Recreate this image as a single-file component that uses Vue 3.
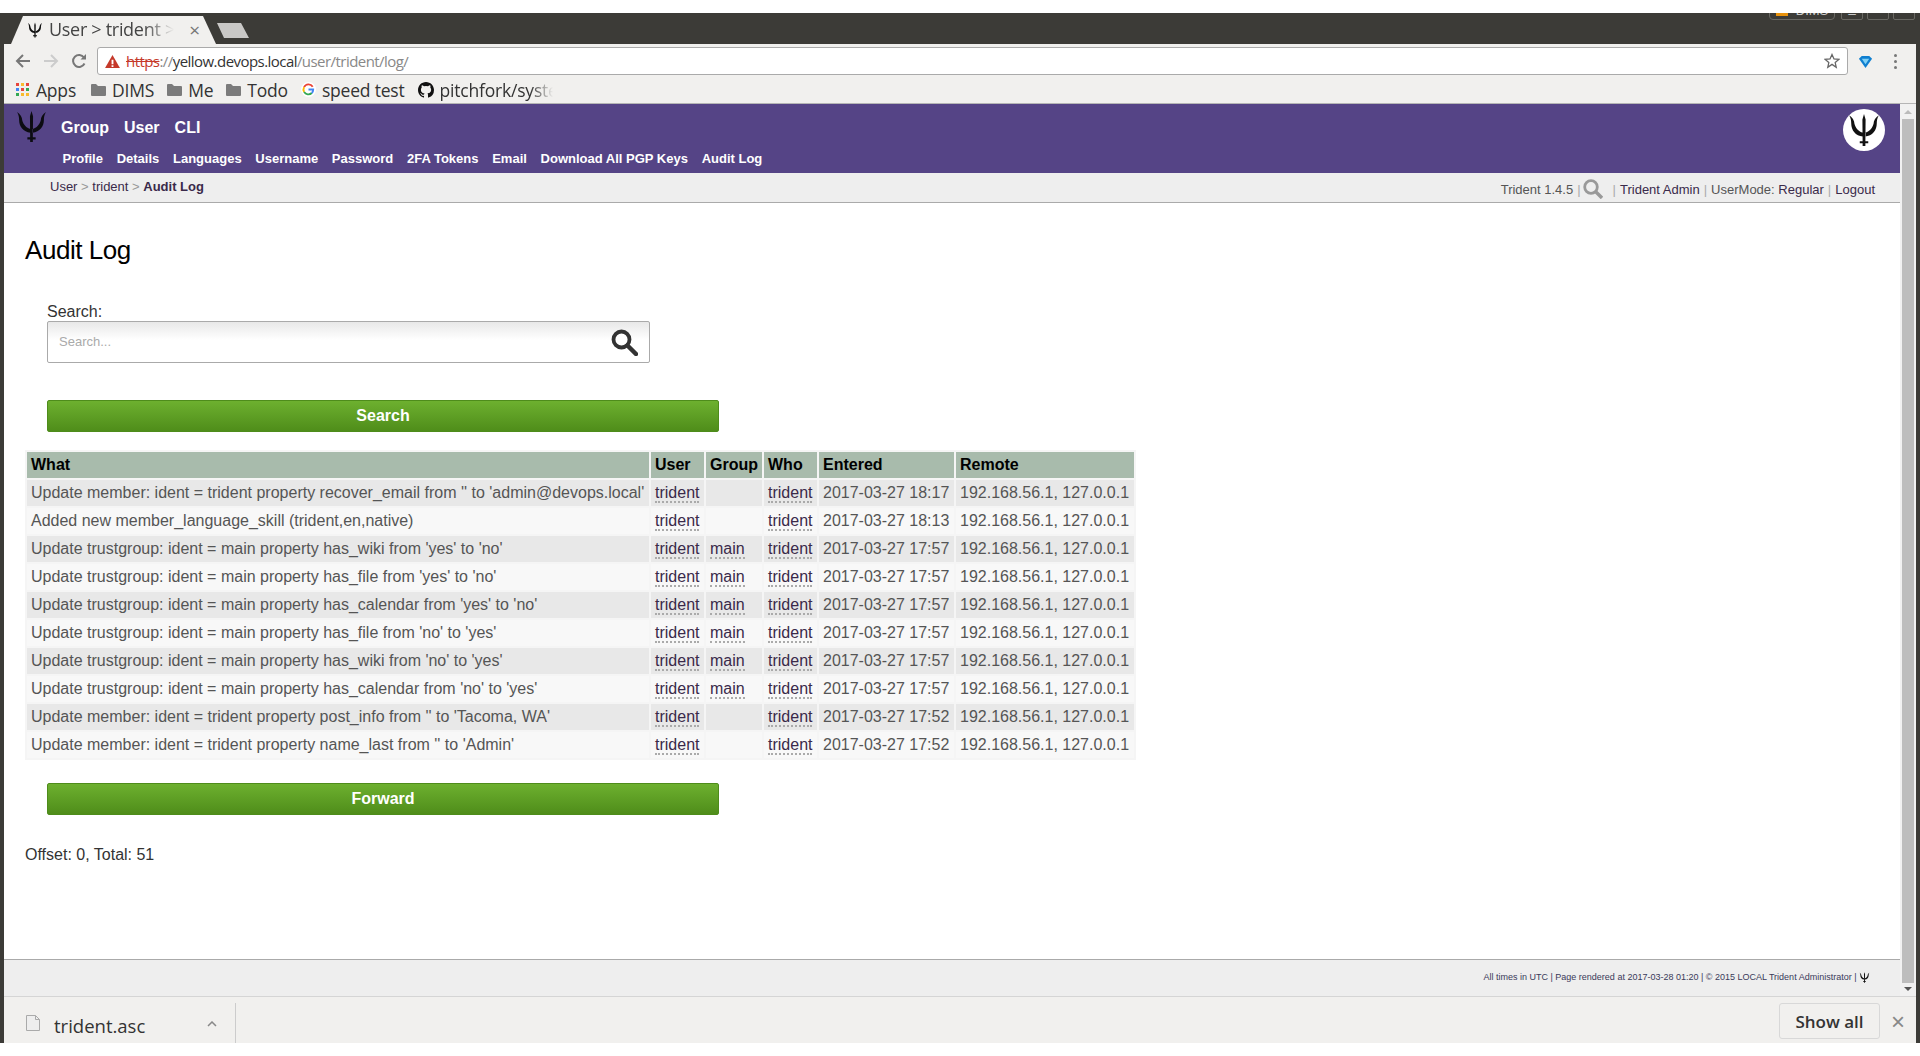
<template>
  <div class="screen">
    <div class="window">
      <!-- browser tab strip -->
      <div class="tabstrip">
        <div class="tab">
          <svg class="tab-icon" viewBox="0 0 32 30"><path :d="tridentPath" fill="#111" /></svg>
          <span class="tab-title">User &gt; trident &gt; Audit Log</span>
          <span class="tab-close">×</span>
        </div>
        <div class="newtab"></div>
        <div class="winctl">
          <span class="profile"><i class="warn-mini"></i>DIMS</span>
          <span class="winbtn">_</span>
          <span class="winbtn">□</span>
          <span class="winbtn">×</span>
        </div>
      </div>

      <!-- address bar -->
      <div class="toolbar">
        <svg class="nav-icon" viewBox="0 0 16 16"><path d="M15 8H2M8 2L2 8l6 6" fill="none" stroke="#777" stroke-width="2" /></svg>
        <svg class="nav-icon fwd" viewBox="0 0 16 16"><path d="M1 8h13M8 2l6 6-6 6" fill="none" stroke="#ccc" stroke-width="2" /></svg>
        <svg class="nav-icon reload" viewBox="0 0 16 16"><path d="M13.5 10.5A6 6 0 1 1 13 4.5" fill="none" stroke="#777" stroke-width="2" /><path d="M9.5 6.5H15V1z" fill="#777" /></svg>
        <div class="omnibox">
          <svg class="warn" viewBox="0 0 16 14"><path d="M8 0l8 14H0z" fill="#c5392a" /><path d="M7 5h2v5H7zM7 11h2v2H7z" fill="#fff" /></svg>
          <span class="url"><span class="https">https</span><span class="url-dim">://</span>yellow.devops.local<span class="url-dim">/user/trident/log/</span></span>
          <svg class="star" viewBox="0 0 16 16"><path d="M8 1.5l2 4.4 4.8.5-3.6 3.2 1 4.7L8 11.4l-4.2 2.9 1-4.7L1.200 6.400l4.800-.5z" fill="none" stroke="#666" stroke-width="1.300" /></svg>
        </div>
        <svg class="ext" viewBox="0 0 16 16"><path d="M1 5l3-3h8l3 3-7 10z" fill="#0f7fd0" /><path d="M4 5h8l-4 6z" fill="#7fd0f5" /></svg>
        <div class="dots"><i></i><i></i><i></i></div>
      </div>

      <!-- bookmarks -->
      <div class="bookmarks">
        <div class="apps-grid"><i v-for="(c, i) in appColors" :key="i" :style="{ background: c }"></i></div>
        <span class="bm bm-apps">Apps</span>
        <template v-for="f in folders" :key="f">
          <svg class="folder" viewBox="0 0 15 13"><path d="M0 2q0-1 1-1h4l2 2h7q1 0 1 1v8q0 1-1 1H1q-1 0-1-1z" fill="#7b7b7b" /></svg>
          <span class="bm">{{ f }}</span>
        </template>
        <svg class="g-icon" viewBox="0 0 16 16">
          <circle cx="8" cy="8" r="8" fill="#fff" />
          <path d="M12.500 5A5.300 5.300 0 0 0 3.300 5.500" fill="none" stroke="#ea4335" stroke-width="2" />
          <path d="M3.300 5.500a5.300 5.300 0 0 0 0 5" fill="none" stroke="#fbbc05" stroke-width="2" />
          <path d="M3.300 10.500a5.300 5.300 0 0 0 8.200 1.300" fill="none" stroke="#34a853" stroke-width="2" />
          <path d="M8 8h5a5.300 5.300 0 0 1-1.500 3.800" fill="none" stroke="#4285f4" stroke-width="2" />
        </svg>
        <span class="bm">speed test</span>
        <svg class="gh-icon" viewBox="0 0 16 16"><path d="M8 0C3.580 0 0 3.580 0 8c0 3.540 2.290 6.530 5.470 7.590.4.070.55-.17.55-.38v-1.340c-2.230.48-2.700-1.070-2.700-1.070-.36-.92-.89-1.170-.89-1.170-.73-.5.060-.49.060-.49.800.060 1.230.82 1.230.82.710 1.220 1.870.87 2.330.66.070-.52.280-.87.510-1.070-1.780-.2-3.640-.89-3.640-3.950 0-.87.310-1.590.82-2.150-.08-.2-.36-1.020.08-2.120 0 0 .67-.21 2.200.82a7.600 7.600 0 0 1 4 0c1.530-1.040 2.200-.82 2.200-.82.44 1.100.16 1.920.08 2.120.51.56.82 1.270.82 2.150 0 3.070-1.870 3.750-3.650 3.950.29.250.54.730.54 1.480v2.200c0 .21.150.46.55.38A8.010 8.010 0 0 0 16 8c0-4.420-3.580-8-8-8z" fill="#111" /></svg>
        <span class="bm bm-fade">pitchfork/system</span>
      </div>

      <div class="middle">
        <div class="page">
          <header class="topnav">
            <svg class="logo" viewBox="0 0 32 30"><path :d="tridentPath" fill="#0c0c12" /></svg>
            <div class="navs">
              <nav class="nav-main"><a v-for="n in mainNav" :key="n">{{ n }}</a></nav>
              <nav class="nav-sub"><a v-for="n in subNav" :key="n">{{ n }}</a></nav>
            </div>
            <div class="avatar">
              <svg viewBox="0 0 32 30"><path :d="tridentPath" fill="#111" /></svg>
            </div>
          </header>

          <div class="crumbs">
            <div class="crumb-left"><a>User</a> <em>&gt;</em> <a>trident</a> <em>&gt;</em> <b>Audit Log</b></div>
            <div class="crumb-right">
              <span class="version">Trident 1.4.5</span><em class="sep sep-tight">|</em>
              <svg class="crumb-search" viewBox="0 0 20 20"><circle cx="8" cy="8" r="6.300" fill="none" stroke="#999" stroke-width="2.800" /><path d="M12.500 12.500L19 19" stroke="#999" stroke-width="3.400" /></svg>
              <em class="sep gap-sep">|</em><a>Trident Admin</a><em class="sep">|</em><span class="version">UserMode:</span>&nbsp;<a>Regular</a><em class="sep">|</em><a>Logout</a>
            </div>
          </div>

          <main class="content">
            <h1 class="title">Audit Log</h1>
            <form class="search" @submit.prevent>
              <label class="search-label" for="q">Search:</label>
              <div class="search-box">
                <input id="q" class="search-input" placeholder="Search...">
                <svg class="search-glass" viewBox="0 0 27 27"><circle cx="10.500" cy="10.500" r="8" fill="#fff" stroke="#333" stroke-width="3.800" /><path d="M16.500 16.500L25 25" stroke="#333" stroke-width="4.500" stroke-linecap="round" /></svg>
              </div>
              <button class="btn btn-search">Search</button>
            </form>

            <table class="log">
              <thead>
                <tr><th v-for="h in headers" :key="h">{{ h }}</th></tr>
              </thead>
              <tbody>
                <tr v-for="(row, i) in rows" :key="i">
                  <td>{{ row.what }}</td>
                  <td><a class="lnk">trident</a></td>
                  <td><a v-if="row.group" class="lnk">{{ row.group }}</a></td>
                  <td><a class="lnk">trident</a></td>
                  <td>{{ row.entered }}</td>
                  <td>192.168.56.1, 127.0.0.1</td>
                </tr>
              </tbody>
            </table>

            <button class="btn btn-forward">Forward</button>
            <p class="offset">Offset: 0, Total: 51</p>
          </main>

          <footer class="pagefoot">
            <span>All times in UTC | Page rendered at 2017-03-28 01:20 | © 2015 LOCAL Trident Administrator | </span>
            <svg class="foot-icon" viewBox="0 0 32 30"><path :d="tridentPath" fill="#111" /></svg>
          </footer>
        </div>

        <div class="scrollbar">
          <i class="arrow-up"></i>
          <div class="thumb"></div>
          <i class="arrow-down"></i>
        </div>
      </div>

      <!-- download shelf -->
      <div class="shelf">
        <svg class="file" viewBox="0 0 14 16"><path d="M.5.5h9l4 4v11H.500z" fill="#eee" stroke="#aaa" /><path d="M9.500.5v4h4" fill="none" stroke="#aaa" /></svg>
        <span class="file-name">trident.asc</span>
        <svg class="chev" viewBox="0 0 10 6"><path d="M1 5l4-4 4 4" fill="none" stroke="#888" stroke-width="1.500" /></svg>
        <div class="shelf-div"></div>
        <button class="showall">Show all</button>
        <span class="shelf-x">×</span>
      </div>
    </div>
  </div>
</template>

<script setup>
// filled trident: centre shaft with crossbar, then the two curved side prongs
const tridentPath = 'M16 0L17.500 5L17.300 25.500H20V27.500H17.300V30H14.700V27.500H12V25.500H14.700L14.500 5Z'
  + 'M2 1C5 3 7 6 7 9C8 13 11 16.500 15 17.500V21C8 20.500 4 15 4 9C4 6 3.500 3.500 2 1Z'
  + 'M30 1C27 3 25 6 25 9C24 13 21 16.500 17 17.500V21C24 20.500 28 15 28 9C28 6 28.500 3.500 30 1Z'

const appColors = ['#e8453c', '#f9bb2d', '#e8453c', '#4285f4', '#e8453c', '#34a853', '#34a853', '#f9bb2d', '#f9bb2d']
const folders = ['DIMS', 'Me', 'Todo']
const mainNav = ['Group', 'User', 'CLI']
const subNav = ['Profile', 'Details', 'Languages', 'Username', 'Password', '2FA Tokens', 'Email', 'Download All PGP Keys', 'Audit Log']
const headers = ['What', 'User', 'Group', 'Who', 'Entered', 'Remote']

const rows = [
  { what: "Update member: ident = trident property recover_email from '' to 'admin@devops.local'", group: '', entered: '2017-03-27 18:17' },
  { what: 'Added new member_language_skill (trident,en,native)', group: '', entered: '2017-03-27 18:13' },
  { what: "Update trustgroup: ident = main property has_wiki from 'yes' to 'no'", group: 'main', entered: '2017-03-27 17:57' },
  { what: "Update trustgroup: ident = main property has_file from 'yes' to 'no'", group: 'main', entered: '2017-03-27 17:57' },
  { what: "Update trustgroup: ident = main property has_calendar from 'yes' to 'no'", group: 'main', entered: '2017-03-27 17:57' },
  { what: "Update trustgroup: ident = main property has_file from 'no' to 'yes'", group: 'main', entered: '2017-03-27 17:57' },
  { what: "Update trustgroup: ident = main property has_wiki from 'no' to 'yes'", group: 'main', entered: '2017-03-27 17:57' },
  { what: "Update trustgroup: ident = main property has_calendar from 'no' to 'yes'", group: 'main', entered: '2017-03-27 17:57' },
  { what: "Update member: ident = trident property post_info from '' to 'Tacoma, WA'", group: '', entered: '2017-03-27 17:52' },
  { what: "Update member: ident = trident property name_last from '' to 'Admin'", group: '', entered: '2017-03-27 17:52' }
]
</script>

<style>
html, body {
  margin: 0;
  background: #fff;
}
</style>

<style scoped>
.screen {
  height: 1056px;
  padding: 13px 0;
  box-sizing: border-box;
  background: #fff;
  overflow: hidden;
  font-family: "Liberation Sans", Arial, sans-serif;
}

.window {
  height: 100%;
  display: flex;
  flex-direction: column;
  border-left: 4px solid #3c3b37;
  border-right: 4px solid #3c3b37;
  box-sizing: border-box;
  background: #f1f0ee;
}

.tabstrip {
  height: 31px;
  flex: none;
  display: flex;
  background: #3c3b37;
  overflow: hidden;
}

.tab {
  width: 205px;
  height: 28px;
  margin: 3px 0 0 7px;
  flex: none;
  display: flex;
  align-items: center;
  box-sizing: border-box;
  padding: 0 16px 0 16px;
  background: #f1f0ee;
  clip-path: polygon(0 100%, 12px 0, 192px 0, 100% 100%);
  font-family: "Open Sans", sans-serif;
  font-size: 18px;
  line-height: 24px;
  color: #444;
}

.tab-icon {
  width: 16px;
  height: 16px;
  flex: none;
  margin-right: 6px;
}

.tab-title {
  flex: 1;
  overflow: hidden;
  white-space: nowrap;
  margin-top: -2px;
  -webkit-mask-image: linear-gradient(to right, #000 70%, transparent 92%);
  mask-image: linear-gradient(to right, #000 70%, transparent 92%);
  letter-spacing: -0.3px;
}

.tab-close {
  color: #777;
  font-size: 19px;
  margin-left: 4px;
}

.newtab {
  width: 32px;
  height: 15px;
  margin: 10px 0 0 1px;
  flex: none;
  background: #c9c8c6;
  clip-path: polygon(0 0, 24px 0, 100% 100%, 7px 100%);
}

.winctl {
  margin-left: auto;
  margin-right: 1px;
  display: flex;
  gap: 4px;
  height: 7px;
  align-items: flex-end;
}

.profile {
  width: 66px;
  height: 22px;
  margin-right: 2px;
  box-sizing: border-box;
  display: flex;
  align-items: flex-end;
  justify-content: center;
  gap: 8px;
  border: 1px solid #6a6964;
  border-radius: 4px;
  color: #ccc;
  font-size: 13px;
  line-height: 14px;
  padding-bottom: 1px;
}

.warn-mini {
  width: 12px;
  height: 6px;
  background: #e8920c;
  margin-bottom: 2px;
}

.winbtn {
  width: 22px;
  height: 22px;
  box-sizing: border-box;
  border: 1px solid #6a6964;
  border-radius: 2px;
  color: #ddd;
  font-size: 13px;
  line-height: 18px;
  text-align: center;
  overflow: hidden;
}

.toolbar {
  height: 34px;
  flex: none;
  display: flex;
  align-items: center;
  padding-left: 11px;
}

.nav-icon {
  width: 16px;
  height: 16px;
  flex: none;
}

.fwd {
  margin-left: 12px;
}

.reload {
  margin-left: 12px;
}

.omnibox {
  width: 1751px;
  height: 28px;
  margin-left: 10px;
  flex: none;
  box-sizing: border-box;
  display: flex;
  align-items: center;
  padding: 0 7px 0 7px;
  background: #fff;
  border: 1px solid #aaa;
  border-radius: 3px;
}

.warn {
  width: 15px;
  height: 13px;
  margin-right: 6px;
}

.url {
  font-family: "Open Sans", sans-serif;
  font-size: 15px;
  letter-spacing: -0.55px;
  color: #333;
  flex: 1;
}

.url-dim {
  color: #888;
}

.https {
  color: #c5392a;
  text-decoration: line-through;
}

.star {
  width: 16px;
  height: 16px;
}

.ext {
  width: 15px;
  height: 15px;
  margin-left: 10px;
  flex: none;
}

.dots {
  margin-left: 21px;
  display: flex;
  flex-direction: column;
  gap: 3px;
}

.dots i {
  width: 3px;
  height: 3px;
  border-radius: 50%;
  background: #777;
}

.bookmarks {
  height: 26px;
  flex: none;
  display: flex;
  align-items: center;
  padding: 0 0 2px 12px;
  border-bottom: 1px solid #b5b5b5;
  box-sizing: border-box;
  font-family: "Open Sans", sans-serif;
  font-size: 17.500px;
  color: #333;
}

.apps-grid {
  width: 13px;
  height: 13px;
  display: grid;
  grid-template-columns: repeat(3, 3px);
  grid-auto-rows: 3px;
  gap: 2px;
  margin-right: 7px;
}

.bm {
  margin-right: 13px;
  white-space: nowrap;
  letter-spacing: -0.2px;
}

.bm-apps {
  margin-right: 15px;
}

.folder {
  width: 15px;
  height: 13px;
  margin-right: 6px;
  flex: none;
}

.g-icon {
  width: 15px;
  height: 15px;
  flex: none;
  margin-right: 6px;
}

.gh-icon {
  width: 16px;
  height: 16px;
  flex: none;
  margin-right: 6px;
}

.bm-fade {
  width: 113px;
  overflow: hidden;
  margin: 0;
  -webkit-mask-image: linear-gradient(to right, #000 80%, transparent 100%);
  mask-image: linear-gradient(to right, #000 80%, transparent 100%);
}

.middle {
  flex: 1;
  min-height: 0;
  display: flex;
}

.page {
  flex: 1;
  min-width: 0;
  display: flex;
  flex-direction: column;
  background: #fff;
}

.topnav {
  height: 69px;
  flex: none;
  display: flex;
  background: #554486;
  color: #fff;
  font-weight: bold;
}

.logo {
  width: 33px;
  height: 31px;
  margin: 7px 0 0 11px;
  flex: none;
}

.navs {
  margin-left: 13px;
}

.nav-main {
  display: flex;
  gap: 15px;
  margin-top: 15px;
  font-size: 16px;
  line-height: 18px;
}

.nav-sub {
  display: flex;
  gap: 13.700px;
  margin: 14px 0 0 1.500px;
  font-size: 13px;
  line-height: 15px;
}

.avatar {
  width: 42px;
  height: 42px;
  margin: 5px 15px 0 auto;
  flex: none;
  border-radius: 50%;
  background: #fff;
  display: flex;
  align-items: center;
  justify-content: center;
}

.avatar svg {
  width: 34px;
  height: 34px;
}

.crumbs {
  height: 30px;
  flex: none;
  box-sizing: border-box;
  display: flex;
  justify-content: space-between;
  padding: 6px 25px 0 46px;
  background: #eee;
  border-bottom: 1px solid #aaa;
  font-size: 13px;
  line-height: 15px;
  color: #3a2a4a;
}

.crumb-left em {
  font-style: normal;
  color: #999;
}

.crumb-right {
  display: flex;
  align-items: flex-start;
  padding-top: 3px;
  white-space: pre;
}

.version {
  color: #555;
}

.sep {
  font-style: normal;
  color: #aaa;
  margin: 0 4px;
}

.sep-tight {
  margin-right: 2px;
}

.gap-sep {
  margin-left: 10px;
}

.crumb-search {
  width: 20px;
  height: 20px;
  margin-top: -3px;
  flex: none;
}

.content {
  flex: 1;
  padding: 0 0 0 21px;
}

.title {
  margin: 32px 0 0;
  font-size: 26px;
  line-height: 30px;
  font-weight: normal;
  letter-spacing: -0.45px;
  color: #000;
}

.search {
  margin: 0 0 0 22px;
  padding-top: 38px;
  width: 672px;
}

.search-label {
  display: block;
  font-size: 16px;
  line-height: 18px;
  color: #333;
}

.search-box {
  width: 603px;
  height: 42px;
  position: relative;
}

.search-input {
  width: 100%;
  height: 100%;
  box-sizing: border-box;
  padding: 0 40px 2px 11px;
  border: 1px solid #aaa;
  border-radius: 2px;
  background: linear-gradient(to bottom, #e8e8e8, #fff 45%);
  font-family: inherit;
  font-size: 13px;
  outline: none;
}

.search-input::placeholder {
  color: #aaa;
}

.search-glass {
  position: absolute;
  right: 12px;
  top: 8px;
  width: 27px;
  height: 27px;
}

.btn {
  display: block;
  width: 672px;
  height: 32px;
  box-sizing: border-box;
  border: 1px solid #4e8c1b;
  border-radius: 2px;
  background: linear-gradient(to bottom, #6db02f, #4f8d1a);
  color: #fff;
  font-family: inherit;
  font-size: 16px;
  font-weight: bold;
  padding: 0;
}

.btn-search {
  margin-top: 37px;
}

.log {
  margin: 18px 0 0;
  border-spacing: 2px;
  background: #f5f5f5;
  font-size: 16px;
  line-height: 18px;
  color: #555;
}

.log th {
  padding: 4px;
  text-align: left;
  color: #000;
  background: #a8bbac;
  white-space: nowrap;
}

.log th:nth-child(1) { min-width: 614px; }
.log th:nth-child(2) { min-width: 45px; }
.log th:nth-child(3) { min-width: 48px; }
.log th:nth-child(4) { min-width: 45px; }
.log th:nth-child(5) { min-width: 127px; }
.log th:nth-child(6) { min-width: 170px; }

.log td {
  padding: 4px;
  white-space: nowrap;
}

.log tbody tr:nth-child(odd) td {
  background: #e8e8e8;
}

.log tbody tr:nth-child(even) td {
  background: #f8f8f8;
}

.lnk {
  color: #3a2a4a;
  border-bottom: 2px dotted #aaa;
}

.btn-forward {
  margin: 23px 0 0 22px;
}

.offset {
  margin: 31px 0 0;
  font-size: 16px;
  line-height: 18px;
  color: #333;
}

.pagefoot {
  height: 37px;
  flex: none;
  box-sizing: border-box;
  display: flex;
  justify-content: flex-end;
  align-items: flex-start;
  padding: 12px 30px 0 0;
  background: #eee;
  border-top: 1px solid #aaa;
  font-size: 9px;
  line-height: 11px;
  color: #3a3a5a;
  white-space: pre;
}

.foot-icon {
  width: 11px;
  height: 11px;
}

.scrollbar {
  width: 16px;
  flex: none;
  display: flex;
  flex-direction: column;
  align-items: center;
  background: #f1f1f1;
  padding: 6px 0 5px;
  box-sizing: border-box;
}

.thumb {
  width: 12px;
  flex: 1;
  margin: 5px 0 4px;
  background: #bdbdbd;
}

.arrow-up, .arrow-down {
  width: 0;
  height: 0;
  border-left: 4px solid transparent;
  border-right: 4px solid transparent;
}

.arrow-up {
  border-bottom: 4px solid #bbb;
}

.arrow-down {
  border-top: 4px solid #555;
}

.shelf {
  height: 47px;
  flex: none;
  box-sizing: border-box;
  display: flex;
  align-items: center;
  padding-left: 22px;
  border-top: 1px solid #d5d5d5;
  background: #f1f0ee;
}

.file {
  width: 14px;
  height: 16px;
  margin-top: 6px;
  flex: none;
}

.file-name {
  margin-left: 14px;
  width: 153px;
  font-family: "Open Sans", sans-serif;
  font-size: 18.500px;
  color: #333;
  margin-top: 10px;
}

.chev {
  width: 10px;
  height: 6px;
  margin-top: 8px;
  flex: none;
}

.shelf-div {
  width: 1px;
  height: 40px;
  margin: 6px 0 0 18px;
  background: #ccc;
}

.showall {
  width: 101px;
  height: 36px;
  margin: 2px 0 0 auto;
  padding: 0;
  border: 1px solid #d8d8d8;
  border-radius: 3px;
  background: #f1f0ee;
  font-family: "Open Sans", sans-serif;
  font-size: 17px;
  font-weight: 600;
  color: #333;
}

.shelf-x {
  width: 36px;
  margin-top: 4px;
  text-align: center;
  font-size: 24px;
  color: #888;
}
</style>
